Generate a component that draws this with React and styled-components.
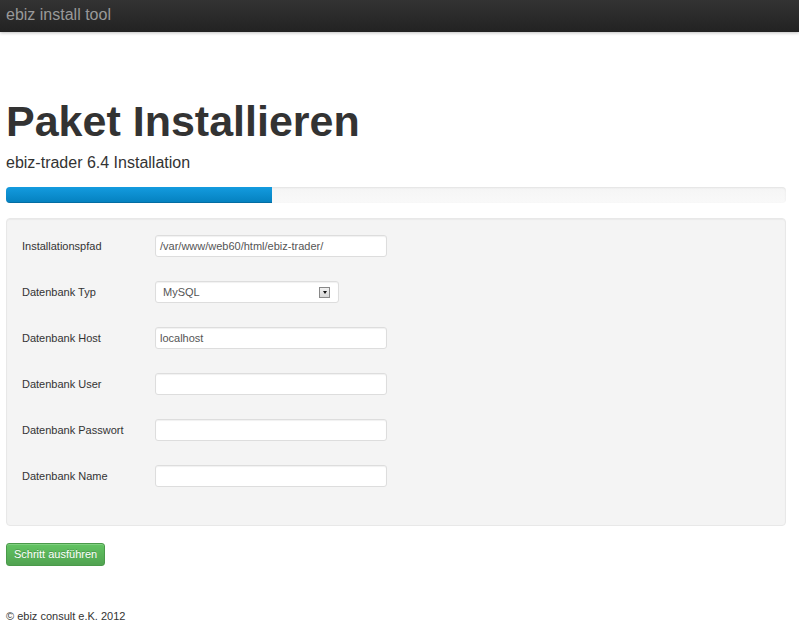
import styled, { createGlobalStyle } from "styled-components";

const fields = [
  { label: "Installationspfad", value: "/var/www/web60/html/ebiz-trader/" },
  { label: "Datenbank Typ", value: "MySQL", select: true },
  { label: "Datenbank Host", value: "localhost" },
  { label: "Datenbank User", value: "" },
  { label: "Datenbank Passwort", value: "" },
  { label: "Datenbank Name", value: "" },
];

const GlobalStyle = createGlobalStyle`
  html, body {
    margin: 0;
    padding: 0;
    background: #fff;
    font-family: "Liberation Sans", Arial, sans-serif;
    color: #333;
  }
`;

const Navbar = styled.div`
  height: 32px;
  background: linear-gradient(to bottom, #333333, #222222);
  box-shadow: 0 1px 3px rgba(0, 0, 0, 0.25);
  display: flex;
  align-items: center;
  padding-left: 6px;
  .brand {
    font-size: 16px;
    color: #999;
    line-height: 20px;
    margin-top: -3px;
  }
`;

const Container = styled.div`
  width: 780px;
  margin-left: 6px;
`;

const Title = styled.h1`
  margin: 68px 0 0;
  font-size: 43px;
  line-height: 43px;
  font-weight: bold;
  color: #333;
`;

const Subtitle = styled.div`
  margin-top: 10px;
  font-size: 16px;
  line-height: 20px;
  color: #333;
`;

const Progress = styled.div`
  margin-top: 14px;
  height: 16px;
  border-radius: 4px;
  overflow: hidden;
  background: linear-gradient(to bottom, #f5f5f5, #f9f9f9);
  box-shadow: inset 0 1px 2px rgba(0, 0, 0, 0.08);
`;

const Bar = styled.div`
  height: 100%;
  background: linear-gradient(to bottom, #149bdf, #0480be);
  box-shadow: inset 0 -1px 0 rgba(0, 0, 0, 0.15);
`;

const Well = styled.div`
  margin-top: 15px;
  background: #f4f4f4;
  border: 1px solid #e8e8e8;
  border-radius: 4px;
  box-shadow: inset 0 1px 1px rgba(0, 0, 0, 0.04);
  padding: 16px 15px 38px;
  display: grid;
  row-gap: 24px;
`;

const Row = styled.div`
  display: flex;
  align-items: center;
  height: 22px;
`;

const Label = styled.div`
  width: 133px;
  font-size: 11px;
  color: #333;
`;

const Input = styled.div`
  box-sizing: border-box;
  width: ${(p) => (p.$select ? "184px" : "232px")};
  height: 22px;
  background: #fff;
  border: 1px solid #ddd;
  border-radius: 3px;
  box-shadow: inset 0 1px 1px rgba(0, 0, 0, 0.06);
  display: flex;
  align-items: center;
  justify-content: space-between;
  padding: 0 8px 0 4px;
  font-size: 11px;
  color: #555;
  ${(p) => p.$select && "padding-left: 7px;"}
`;

const Arrow = styled.span`
  box-sizing: border-box;
  width: 11px;
  height: 11px;
  border: 1px solid #888;
  background: linear-gradient(to bottom, #f2f2f2, #d6d6d6);
  display: flex;
  align-items: center;
  justify-content: center;
  &::after {
    content: "";
    border-left: 2.5px solid transparent;
    border-right: 2.5px solid transparent;
    border-top: 3px solid #111;
  }
`;

const Button = styled.div`
  display: inline-block;
  margin-top: 17px;
  height: 23px;
  line-height: 21px;
  padding: 0 7px;
  font-size: 11px;
  color: #fff;
  background: linear-gradient(to bottom, #62c462, #51a351);
  border: 1px solid #4a9a4a;
  border-radius: 3px;
  box-sizing: border-box;
  text-shadow: 0 -1px 0 rgba(0, 0, 0, 0.2);
  box-shadow: inset 0 1px 0 rgba(255, 255, 255, 0.2);
`;

const Footer = styled.div`
  margin-top: 43px;
  font-size: 11px;
  line-height: 14px;
  color: #333;
`;

const App = () => {
  return (
    <>
      <GlobalStyle />
      <Navbar>
        <span className="brand">ebiz install tool</span>
      </Navbar>
      <Container>
        <Title>Paket Installieren</Title>
        <Subtitle>ebiz-trader 6.4 Installation</Subtitle>
        <Progress>
          <Bar style={{ width: "34.1%" }} />
        </Progress>
        <Well>
          {fields.map((f) => (
            <Row key={f.label}>
              <Label>{f.label}</Label>
              <Input $select={f.select}>
                <span>{f.value}</span>
                {f.select && <Arrow />}
              </Input>
            </Row>
          ))}
        </Well>
        <Button>Schritt ausführen</Button>
        <Footer>© ebiz consult e.K. 2012</Footer>
      </Container>
    </>
  );
};

export default App;
